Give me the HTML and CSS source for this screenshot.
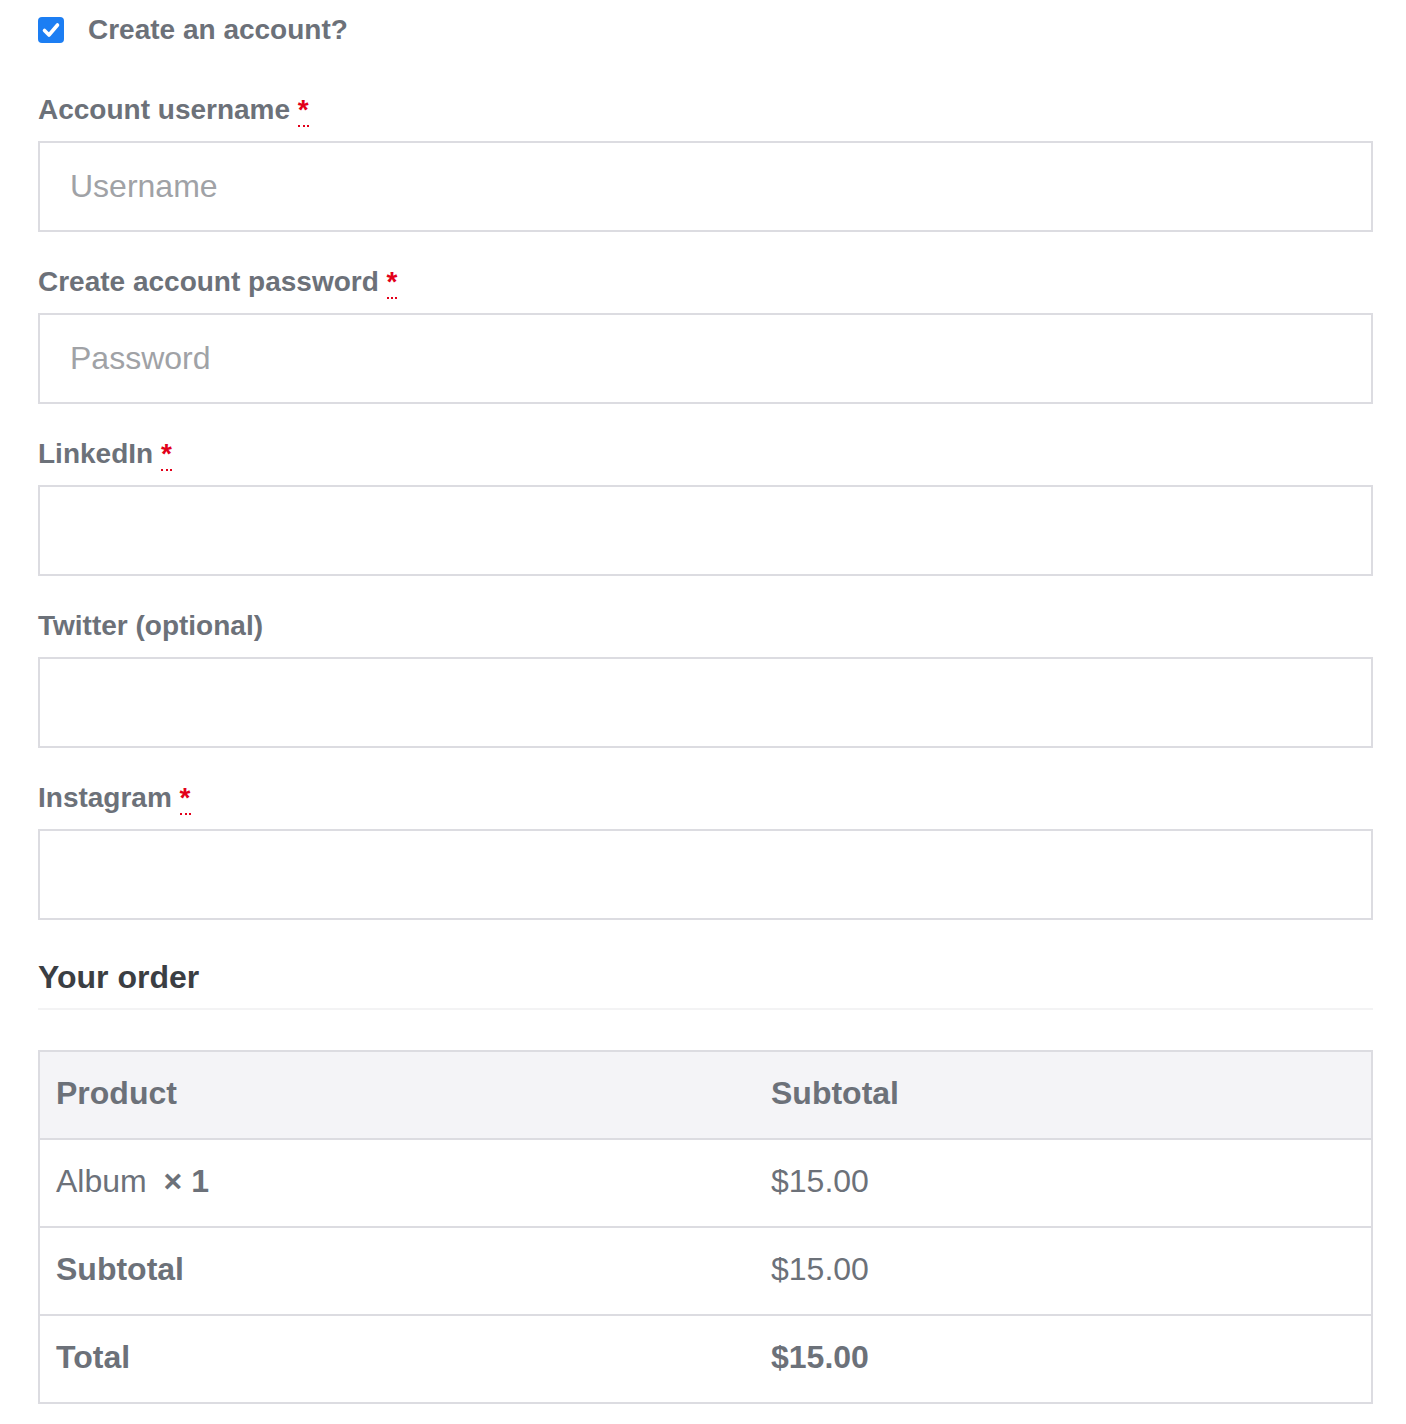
FILE: index.html
```html
<!DOCTYPE html>
<html lang="en">
<head>
<meta charset="utf-8">
<title>Checkout</title>
<link rel="stylesheet" href="styles.css">
</head>
<body>
<div class="page">
  <label class="check-row">
    <span class="checkbox" aria-hidden="true">
      <svg viewBox="0 0 26 26" width="26" height="26"><path d="M6.5 13.5 L11 18 L19.5 8" fill="none" stroke="#fff" stroke-width="3.6" stroke-linecap="round" stroke-linejoin="round"/></svg>
    </span>
    <span class="check-text">Create an account?</span>
  </label>

  <div class="field">
    <label class="field-label">Account username <abbr class="required" title="required">*</abbr></label>
    <input class="field-input" type="text" placeholder="Username">
  </div>
  <div class="field">
    <label class="field-label">Create account password <abbr class="required" title="required">*</abbr></label>
    <input class="field-input" type="password" placeholder="Password">
  </div>
  <div class="field">
    <label class="field-label">LinkedIn <abbr class="required" title="required">*</abbr></label>
    <input class="field-input" type="text">
  </div>
  <div class="field">
    <label class="field-label">Twitter (optional)</label>
    <input class="field-input" type="text">
  </div>
  <div class="field">
    <label class="field-label">Instagram <abbr class="required" title="required">*</abbr></label>
    <input class="field-input" type="text">
  </div>

  <h3 class="order-title">Your order</h3>

  <table class="order-table">
    <thead>
      <tr><th class="col-product">Product</th><th class="col-total">Subtotal</th></tr>
    </thead>
    <tbody>
      <tr><td>Album <strong class="qty">&times; 1</strong></td><td>$15.00</td></tr>
    </tbody>
    <tfoot>
      <tr><th>Subtotal</th><td>$15.00</td></tr>
      <tr><th>Total</th><td><strong>$15.00</strong></td></tr>
    </tfoot>
  </table>
</div>
</body>
</html>
```

FILE: styles.css
```css
html, body {
  margin: 0;
  padding: 0;
  background: #ffffff;
}
body {
  font-family: "Liberation Sans", Arial, Helvetica, sans-serif;
  color: #6c7179;
}
.page {
  width: 1335px;
  margin-left: 38px;
  padding-top: 10px;
}
.check-row {
  display: flex;
  align-items: center;
  height: 40px;
  margin-bottom: 40px;
}
.checkbox {
  width: 26px;
  height: 26px;
  border-radius: 4px;
  background: #1c7ef3;
  display: flex;
  align-items: center;
  justify-content: center;
  margin-right: 24px;
}
.checkbox svg { display: block; }
.check-text {
  font-size: 28px;
  font-weight: bold;
  color: #6c7179;
}
.field {
  display: flex;
  flex-direction: column;
  margin-bottom: 30px;
}
.field-label {
  display: block;
  height: 40px;
  line-height: 40px;
  font-size: 28px;
  font-weight: bold;
  color: #6c7179;
  margin-bottom: 11px;
}
.required {
  color: #e2001a;
  text-decoration: none;
  border-bottom: 2px dotted #e2001a;
  font-weight: bold;
}
.field-input {
  box-sizing: border-box;
  width: 100%;
  height: 91px;
  border: 2px solid #dcdce1;
  background: #fff;
  padding: 0 30px;
  font-family: "Liberation Sans", Arial, Helvetica, sans-serif;
  font-size: 32px;
  color: #6c7179;
  outline: none;
  margin: 0;
  border-radius: 0;
}
.field-input::placeholder {
  color: #a0a2a6;
}
.order-title {
  margin: 37px 0 0 0;
  height: 40px;
  line-height: 40px;
  font-size: 32px;
  font-weight: bold;
  color: #3b3e43;
  padding-bottom: 11px;
  border-bottom: 2px solid #f3f3f4;
  margin-bottom: 40px;
}
.order-table {
  width: 100%;
  border-collapse: collapse;
  border: 2px solid #dcdce1;
  font-size: 32px;
}
.order-table th,
.order-table td {
  text-align: left;
  height: 88px;
  padding: 0 16px 4px 16px;
  border-top: 2px solid #dcdce1;
  color: #6c7179;
  box-sizing: border-box;
}
.order-table th { font-weight: bold; }
.order-table td { font-weight: normal; }
.order-table thead th { background: #f4f4f7; }
.col-product { width: 716px; }
.qty {
  font-weight: bold;
  margin-left: 8px;
}
```
